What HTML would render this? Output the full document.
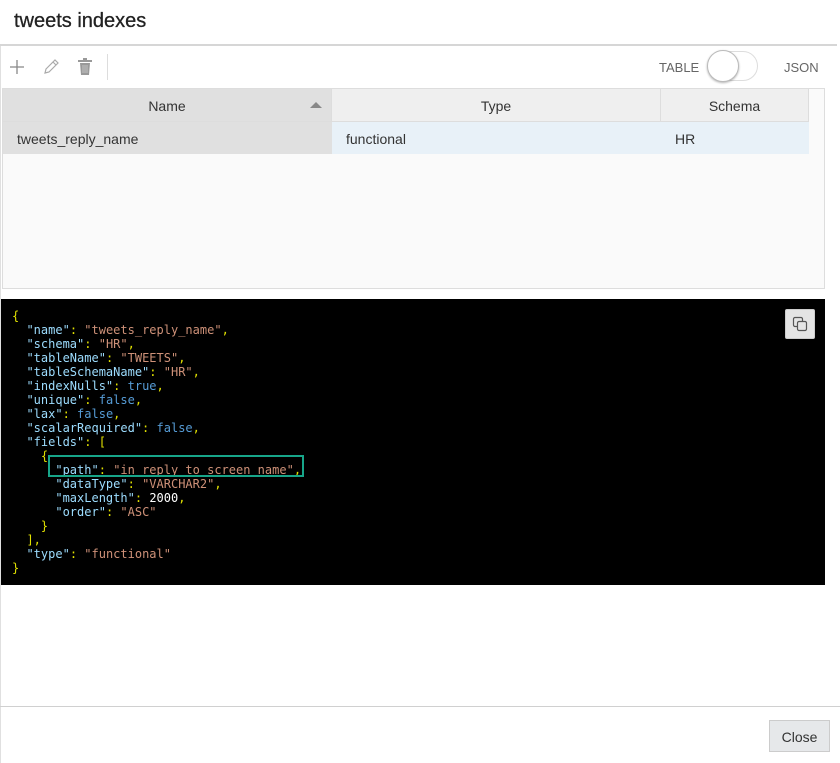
<!DOCTYPE html>
<html><head><meta charset="utf-8"><style>
*{box-sizing:border-box;margin:0;padding:0}
body{width:840px;height:763px;background:#fff;font-family:"Liberation Sans",sans-serif;color:#333;position:relative;overflow:hidden}
.abs{position:absolute}
.title{left:14px;top:10px;font-size:20px;color:#222;-webkit-text-stroke:0.3px #222}
.hr1{left:0;top:44px;width:837px;height:2px;background:#d6d6d6}
.vl{left:0;top:46px;width:1px;height:717px;background:#e0e0e0}
.tbl{left:2px;top:88px;width:823px;height:201px;background:#fafafa;border:1px solid #ddd}
.th{top:0;height:33px;background:#efefef;border-right:1px solid #ddd;border-bottom:1px solid #ddd;font-size:14px;text-align:center;line-height:34px;color:#333}
.td{top:33px;height:32px;font-size:14px;line-height:34px;padding-left:14px;background:#e8f1f8}
pre{position:absolute;left:1px;top:299px;width:824px;height:286px;background:#000;font-family:"DejaVu Sans Mono","Liberation Mono",monospace;font-size:12px;line-height:14px;padding:10px 0 0 11px;color:#9cdcfe}
.k{color:#9cdcfe}.s{color:#ce9178}.p{color:#e0e000}.b{color:#569cd6}.n{color:#fff}
</style></head><body>
<div class="abs title">tweets indexes</div>
<div class="abs hr1"></div>
<div class="abs vl"></div>
<svg class="abs" style="left:9px;top:59px" width="16" height="16"><path d="M8 1v14M1 8h14" stroke="#888" stroke-width="1.3"/></svg>
<svg class="abs" style="left:42px;top:58px" width="18" height="18"><path d="M3 15l1-4 9-9 3 3-9 9z M11 4l3 3" stroke="#aaa" stroke-width="1.2" fill="none"/></svg>
<svg class="abs" style="left:77px;top:58px" width="16" height="18"><rect x="1" y="2" width="14" height="2" fill="#999"/><rect x="6" y="0" width="4" height="2" fill="#999"/><path d="M3 5h10l-1 12H4z" fill="#999"/><path d="M6 7v8M8 7v8M10 7v8" stroke="#ccc" stroke-width="0.8"/></svg>
<div class="abs" style="left:107px;top:54px;width:1px;height:26px;background:#ddd"></div>
<div class="abs" style="left:659px;top:60px;font-size:13px;color:#666">TABLE</div>
<div class="abs" style="left:708px;top:51px;width:50px;height:30px;border:1px solid #ddd;border-radius:15px;background:#fff"></div>
<div class="abs" style="left:707px;top:50px;width:32px;height:32px;border-radius:16px;background:#fff;border:1px solid #bbb;box-shadow:0 1px 2px rgba(0,0,0,.3)"></div>
<div class="abs" style="left:784px;top:60px;font-size:13px;color:#666">JSON</div>
<div class="abs tbl">
<div class="abs th" style="left:0;width:329px;background:#e0e0e0">Name<svg class="abs" style="left:307px;top:12px" width="12" height="8"><path d="M0 7L6 1l6 6z" fill="#888"/></svg></div>
<div class="abs th" style="left:329px;width:329px">Type</div>
<div class="abs th" style="left:658px;width:148px">Schema</div>
<div class="abs td" style="left:0;width:329px;background:#e0e0e0">tweets_reply_name</div>
<div class="abs td" style="left:329px;width:329px">functional</div>
<div class="abs td" style="left:658px;width:148px">HR</div>
</div>
<pre><span class="p">{</span>
  <span class="k">"name"</span><span class="p">:</span> <span class="s">"tweets_reply_name"</span><span class="p">,</span>
  <span class="k">"schema"</span><span class="p">:</span> <span class="s">"HR"</span><span class="p">,</span>
  <span class="k">"tableName"</span><span class="p">:</span> <span class="s">"TWEETS"</span><span class="p">,</span>
  <span class="k">"tableSchemaName"</span><span class="p">:</span> <span class="s">"HR"</span><span class="p">,</span>
  <span class="k">"indexNulls"</span><span class="p">:</span> <span class="b">true</span><span class="p">,</span>
  <span class="k">"unique"</span><span class="p">:</span> <span class="b">false</span><span class="p">,</span>
  <span class="k">"lax"</span><span class="p">:</span> <span class="b">false</span><span class="p">,</span>
  <span class="k">"scalarRequired"</span><span class="p">:</span> <span class="b">false</span><span class="p">,</span>
  <span class="k">"fields"</span><span class="p">: [</span>
    <span class="p">{</span>
      <span class="k">"path"</span><span class="p">:</span> <span class="s">"in_reply_to_screen_name"</span><span class="p">,</span>
      <span class="k">"dataType"</span><span class="p">:</span> <span class="s">"VARCHAR2"</span><span class="p">,</span>
      <span class="k">"maxLength"</span><span class="p">:</span> <span class="n">2000</span><span class="p">,</span>
      <span class="k">"order"</span><span class="p">:</span> <span class="s">"ASC"</span>
    <span class="p">}</span>
  <span class="p">],</span>
  <span class="k">"type"</span><span class="p">:</span> <span class="s">"functional"</span>
<span class="p">}</span></pre>
<div class="abs" style="left:48px;top:455px;width:256px;height:22px;border:2px solid #17a589"></div>
<div class="abs" style="left:785px;top:309px;width:30px;height:30px;background:#e4e4e4;border:1px solid #ccc;border-radius:2px"></div>
<svg class="abs" style="left:792px;top:316px" width="16" height="16"><rect x="1.5" y="1.5" width="9" height="9" rx="1.5" fill="none" stroke="#555" stroke-width="1.2"/><rect x="5.5" y="5.5" width="9" height="9" rx="1.5" fill="#e4e4e4" stroke="#555" stroke-width="1.2"/></svg>
<div class="abs" style="left:0;top:706px;width:840px;height:1px;background:#d0d0d0"></div>
<div class="abs" style="left:769px;top:720px;width:61px;height:32px;background:#e6e8ea;border:1px solid #ccc;font-size:14px;line-height:32px;text-align:center;color:#333">Close</div>
</body></html>
